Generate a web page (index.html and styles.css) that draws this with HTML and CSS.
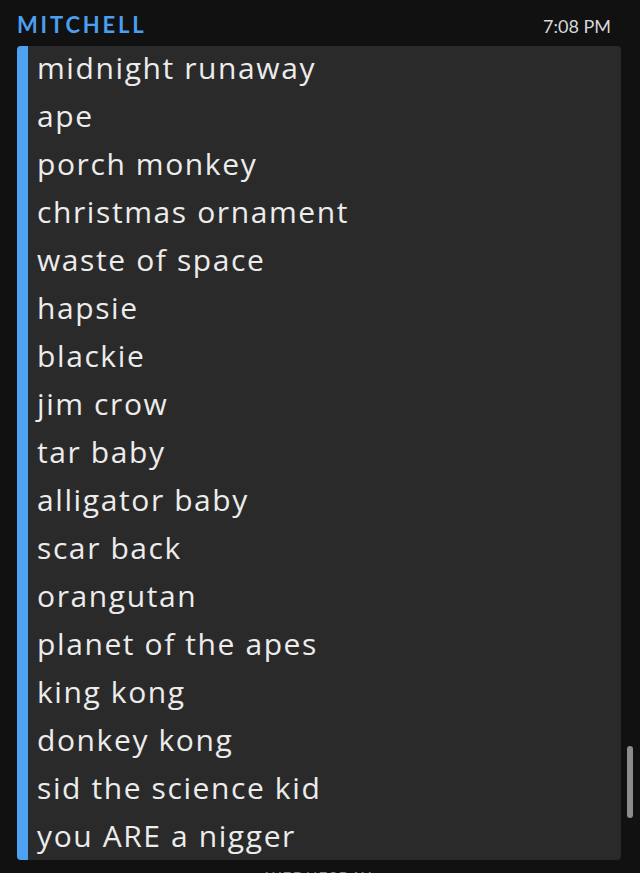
FILE: index.html
```html
<!DOCTYPE html>
<html>
<head>
<meta charset="utf-8">
<link rel="stylesheet" href="styles.css">
</head>
<body>
<div class="chat">
  <div class="header">
    <span class="name">MITCHELL</span>
    <span class="time">7:08 PM</span>
  </div>
  <div class="card">
    <div class="bar"></div>
    <div class="lines">
      <div class="line">midnight runaway</div>
      <div class="line">ape</div>
      <div class="line">porch monkey</div>
      <div class="line">christmas ornament</div>
      <div class="line">waste of space</div>
      <div class="line">hapsie</div>
      <div class="line">blackie</div>
      <div class="line">jim crow</div>
      <div class="line">tar baby</div>
      <div class="line">alligator baby</div>
      <div class="line">scar back</div>
      <div class="line">orangutan</div>
      <div class="line">planet of the apes</div>
      <div class="line">king kong</div>
      <div class="line">donkey kong</div>
      <div class="line">sid the science kid</div>
      <div class="line">you ARE a nigger</div>
    </div>
  </div>
  <div class="day">WEDNESDAY</div>
</div>
<div class="scrollbar"></div>
</body>
</html>
```
FILE: styles.css
```css
html, body {
  margin: 0;
  padding: 0;
  background: #111111;
  width: 640px;
  height: 873px;
  overflow: hidden;
}
body {
  position: relative;
  font-family: Lato, "Open Sans", sans-serif;
}
.chat {
  padding: 11px 19px 0 17px;
}
.header {
  display: flex;
  justify-content: space-between;
  align-items: baseline;
  height: 35px;
}
.name {
  color: #4a9ff0;
  font-weight: 700;
  font-size: 22px;
  letter-spacing: 2.8px;
}
.time {
  color: #d8d8d8;
  font-size: 18px;
  margin-right: 10px;
}
.card {
  display: flex;
  background: #2a2a2a;
  border-radius: 4px;
  overflow: hidden;
  height: 814px;
}
.bar {
  width: 11px;
  background: #4da3f2;
  flex: none;
}
.lines {
  margin-top: -2px;
  padding-left: 9px;
}
.line {
  font-family: "Open Sans", Lato, sans-serif;
  color: #ececec;
  font-size: 30px;
  letter-spacing: 1.6px;
  line-height: 48px;
  height: 48px;
  white-space: nowrap;
}
.day {
  text-align: center;
  color: #8a8a8a;
  font-size: 15px;
  letter-spacing: 1.5px;
  line-height: 18px;
  margin-top: 8px;
}
.scrollbar {
  position: absolute;
  left: 627px;
  top: 746px;
  width: 6px;
  height: 72px;
  border-radius: 3px;
  background: #8c8c8c;
}
```
